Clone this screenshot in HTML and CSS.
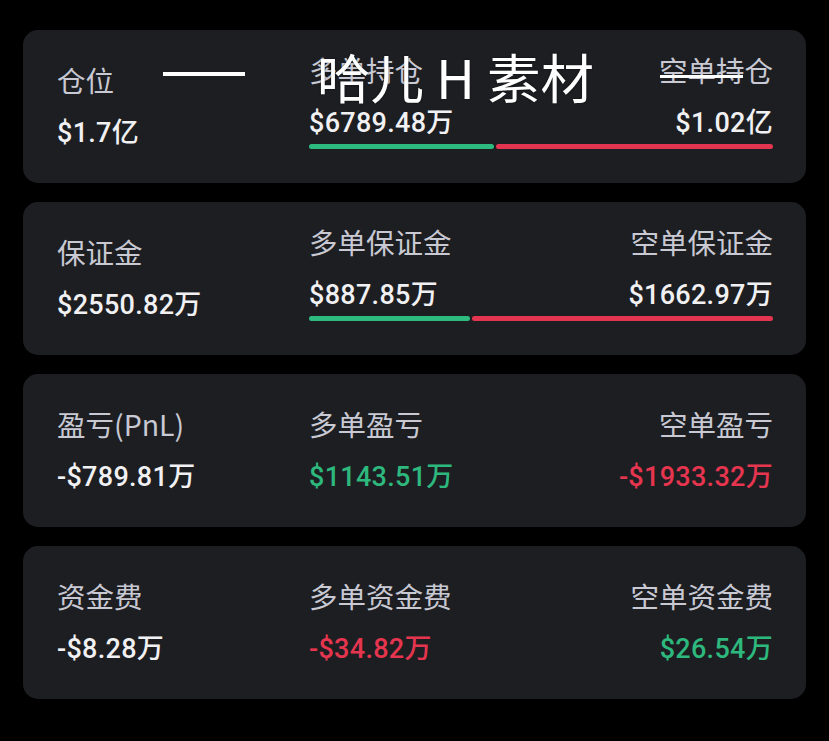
FILE: index.html
```html
<!DOCTYPE html>
<html lang="zh-CN">
<head>
<meta charset="utf-8">
<title>合约数据</title>
<link rel="stylesheet" href="styles.css">
</head>
<body>
<main class="page">
  <section class="card">
    <div class="col-left">
      <div class="label">仓位</div>
      <div class="value">$1.7亿</div>
    </div>
    <div class="col-right">
      <div class="pair">
        <div class="label">多单持仓</div>
        <div class="label">空单持仓</div>
      </div>
      <div class="pair">
        <div class="value">$6789.48万</div>
        <div class="value">$1.02亿</div>
      </div>
      <div class="bar">
        <div class="bar-long" style="width: 39.96%"></div>
        <div class="bar-short"></div>
      </div>
    </div>
  </section>

  <section class="card">
    <div class="col-left">
      <div class="label">保证金</div>
      <div class="value">$2550.82万</div>
    </div>
    <div class="col-right">
      <div class="pair">
        <div class="label">多单保证金</div>
        <div class="label">空单保证金</div>
      </div>
      <div class="pair">
        <div class="value">$887.85万</div>
        <div class="value">$1662.97万</div>
      </div>
      <div class="bar">
        <div class="bar-long" style="width: 34.8%"></div>
        <div class="bar-short"></div>
      </div>
    </div>
  </section>

  <section class="card">
    <div class="col-left">
      <div class="label">盈亏(PnL)</div>
      <div class="value">-$789.81万</div>
    </div>
    <div class="col-right">
      <div class="pair">
        <div class="label">多单盈亏</div>
        <div class="label">空单盈亏</div>
      </div>
      <div class="pair">
        <div class="value up">$1143.51万</div>
        <div class="value down">-$1933.32万</div>
      </div>
    </div>
  </section>

  <section class="card">
    <div class="col-left">
      <div class="label">资金费</div>
      <div class="value">-$8.28万</div>
    </div>
    <div class="col-right">
      <div class="pair">
        <div class="label">多单资金费</div>
        <div class="label">空单资金费</div>
      </div>
      <div class="pair">
        <div class="value down">-$34.82万</div>
        <div class="value up">$26.54万</div>
      </div>
    </div>
  </section>
</main>

<div class="watermark">
  <div class="wm-dash"></div>
  <div class="wm-text">哈儿 H 素材</div>
  <div class="wm-strike"></div>
</div>
</body>
</html>
```

FILE: styles.css
```css
* {
  box-sizing: border-box;
}

html, body {
  margin: 0;
  padding: 0;
  background: #000;
}

body {
  width: 829px;
  height: 741px;
  overflow: hidden;
  position: relative;
  font-family: "Noto Sans CJK SC", "Noto Sans", sans-serif;
}

.page {
  padding: 30px 23px 0 23px;
  display: flex;
  flex-direction: column;
  gap: 19px;
}

.card {
  height: 153px;
  background: #1d1e22;
  border-radius: 15px;
  padding: 0 33px 0 34px;
  display: flex;
  align-items: center;
}

.col-left {
  width: 252px;
  display: flex;
  flex-direction: column;
  gap: 19px;
}

.col-right {
  flex: 1;
  display: flex;
  flex-direction: column;
  gap: 19px;
}

.col-right .bar {
  margin-top: -15px;
  margin-bottom: 11px;
}

.pair {
  display: flex;
  justify-content: space-between;
  align-items: center;
}

.label {
  font-size: 28.5px;
  line-height: 34px;
  color: #c8c9d3;
  white-space: nowrap;
}

.value {
  font-family: "Roboto", "Noto Sans CJK SC", sans-serif;
  font-size: 27px;
  line-height: 34px;
  font-weight: 500;
  letter-spacing: 0.3px;
  color: #f1f1f3;
  white-space: nowrap;
}

.value.up {
  color: #2db87d;
}

.value.down {
  color: #e6354f;
}

.bar {
  height: 5px;
  display: flex;
  gap: 2px;
}

.bar-long {
  height: 100%;
  background: #2ebb80;
  border-radius: 3px;
}

.bar-short {
  flex: 1;
  height: 100%;
  background: #e3354f;
  border-radius: 3px;
}

.watermark {
  position: absolute;
  left: 0;
  top: 0;
  width: 100%;
  height: 120px;
  pointer-events: none;
}

.wm-dash {
  position: absolute;
  left: 163px;
  top: 72px;
  width: 82px;
  height: 4px;
  background: #fff;
}

.wm-text {
  position: absolute;
  left: 317px;
  top: 49px;
  font-family: "Noto Sans CJK SC", sans-serif;
  font-size: 53.5px;
  line-height: 54px;
  color: #fff;
  white-space: nowrap;
  text-shadow: 0 0 2px rgba(0, 0, 0, 0.7);
}

.wm-strike {
  position: absolute;
  left: 660px;
  top: 75px;
  width: 83px;
  height: 3px;
  background: #fff;
}
```
